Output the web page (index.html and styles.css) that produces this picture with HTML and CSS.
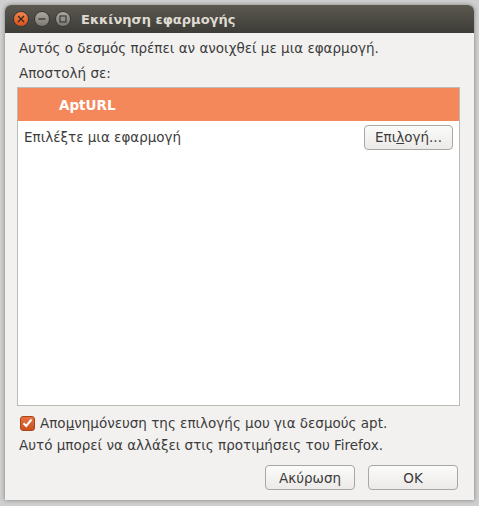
FILE: index.html
```html
<!DOCTYPE html>
<html lang="el">
<head>
  <meta charset="UTF-8" />
  <title>Εκκίνηση εφαρμογής</title>
  <link rel="stylesheet" href="styles.css">
</head>
<body>
  <div class="window">
    <div class="titlebar">
      <div class="controls">
        <span class="ctl close">
          <svg width="8" height="8" viewBox="0 0 8 8"><path d="M1 1L7 7M7 1L1 7" stroke="#3a2a22" stroke-width="1.4"/></svg>
        </span>
        <span class="ctl">
          <svg width="8" height="8" viewBox="0 0 8 8"><path d="M0.5 4H7.5" stroke="#3c3b37" stroke-width="1.4"/></svg>
        </span>
        <span class="ctl">
          <svg width="8" height="8" viewBox="0 0 8 8"><rect x="1" y="1" width="6" height="6" fill="none" stroke="#3c3b37" stroke-width="1.2"/></svg>
        </span>
      </div>
      <div class="title">Εκκίνηση εφαρμογής</div>
    </div>

    <div class="content">
      <p class="line">Αυτός ο δεσμός πρέπει αν ανοιχθεί με μια εφαρμογή.</p>
      <p class="line">Αποστολή σε:</p>

      <div class="list">
        <div class="row selected">AptURL</div>
        <div class="row choose">
          <span>Επιλέξτε μια εφαρμογή</span>
          <button class="btn small">Επι<u>λ</u>ογή...</button>
        </div>
      </div>

      <label class="check">
        <span class="box">
          <svg width="11" height="10" viewBox="0 0 11 10"><path d="M1.5 5.2L4.2 8L9.5 1.5" fill="none" stroke="#fff" stroke-width="2"/></svg>
        </span>
        <span>Απο<u>μ</u>νημόνευση της επιλογής μου για δεσμούς apt.</span>
      </label>
      <p class="line note">Αυτό μπορεί να αλλάξει στις προτιμήσεις του Firefox.</p>

      <div class="actions">
        <button class="btn">Ακύρωση</button>
        <button class="btn">OK</button>
      </div>
    </div>
  </div>
</body>
</html>
```

FILE: styles.css
```css
html, body { margin: 0; height: 100%; }
body {
  background: #cfcfcf;
  font-family: "DejaVu Sans", sans-serif;
  font-size: 13.5px;
  color: #3c3c3c;
  padding: 5px 5px 6px 5px;
  box-sizing: border-box;
}
.window {
  width: 469px; height: 495px;
  background: #f2f1f0;
  border-radius: 6px 6px 0 0;
  display: flex; flex-direction: column;
  box-shadow: 0 0 4px rgba(0,0,0,0.4);
}
.titlebar {
  height: 28px;
  flex-shrink: 0;
  border-radius: 6px 6px 0 0;
  background: linear-gradient(#5b5850, #3d3c37);
  display: flex; align-items: center;
  padding-left: 8px;
}
.controls { display: flex; gap: 5px; }
.ctl {
  width: 14px; height: 14px; border-radius: 50%;
  background: linear-gradient(#aaa79f, #7b7972);
  border: 1px solid #3a3935;
  display: flex; align-items: center; justify-content: center;
}
.ctl.close { background: linear-gradient(#f4864e, #d9501c); }
.title {
  margin-left: 10px;
  color: #dfdbd2;
  font-weight: bold;
  font-size: 13px;
}
.content {
  flex: 1;
  padding: 3px 14px 10px 12px;
  display: flex; flex-direction: column;
}
.line { margin: 0 0 0 2px; line-height: 25px; }
.list {
  flex: 1;
  margin-top: 1px;
  background: #fff;
  border: 1px solid #bdbbb6;
}
.row { display: flex; align-items: center; }
.row.selected {
  height: 33px;
  background: #f4885a;
  color: #fff;
  font-weight: bold;
  padding-left: 41px;
}
.row.choose {
  height: 32px;
  justify-content: space-between;
  padding: 0 6px 0 6px;
}
.btn {
  font: inherit;
  color: #3c3c3c;
  width: 90px; height: 25px;
  border: 1px solid #a9a7a2;
  border-radius: 4px;
  background: linear-gradient(#fbfbfa, #ebeae8);
  padding: 0;
}
.btn.small { width: 89px; }
.check {
  display: flex; align-items: center; gap: 5px;
  margin-top: 7px;
  margin-left: 3px;
  line-height: 20px;
}
.box {
  width: 15px; height: 15px;
  border-radius: 3px;
  background: linear-gradient(#e8733f, #c9521f);
  border: 1px solid #a7451b;
  box-sizing: border-box;
  display: flex; align-items: center; justify-content: center;
}
.note { margin-top: 0; }
.actions {
  display: flex; justify-content: flex-end; gap: 13px;
  margin-top: 7px;
  margin-right: 2px;
}
```
